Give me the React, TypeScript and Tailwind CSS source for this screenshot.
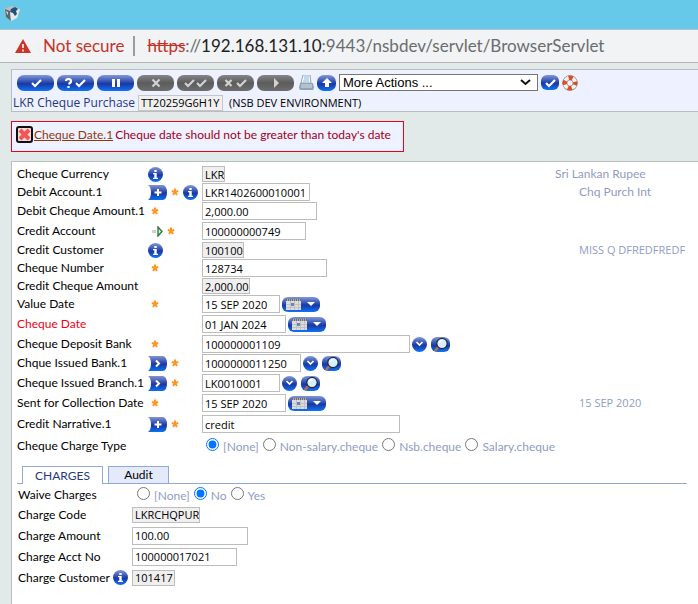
import type { ReactNode } from "react";

const blue = "bg-linear-to-b from-[#8496d6] via-[#1838a4] via-55% to-[#0b74f8]";
const grey = "bg-linear-to-b from-[#858585] via-[#5c5c5c] to-[#6e6e6e]";

function Tick() {
  return <path d="M1 5l3 3 6-6" />;
}

function ToolButton({ label, dark, children }: { label: string; dark?: boolean; children: ReactNode }) {
  return (
    <button
      type="button"
      aria-label={label}
      className={`flex h-4 w-[37px] shrink-0 items-center justify-center rounded-[7px] ${dark ? grey : blue}`}
    >
      <svg width="24" height="10" viewBox="0 0 24 10" fill="none" stroke={dark ? "#d2d2d2" : "#fff"} strokeWidth="2.2">
        {children}
      </svg>
    </button>
  );
}

function Info() {
  return (
    <button
      type="button"
      aria-label="Information"
      className={`flex size-[15px] shrink-0 items-center justify-center rounded-full ${blue}`}
    >
      <svg width="5" height="9" viewBox="0 0 5 9" fill="#fff">
        <path d="M1.300 0h2.400v2H1.300zM0 3h3.700v4.700H5V9H0V7.700h1.300V4.300H0z" />
      </svg>
    </button>
  );
}

function Expand({ plus }: { plus?: boolean }) {
  return (
    <button type="button" aria-label={plus ? "Add value" : "Expand"} className="shrink-0">
      <svg width="19" height="15" viewBox="0 0 19 15">
        <defs>
          <linearGradient id="flag" x1="0" y1="0" x2="0" y2="1">
            <stop offset="0" stopColor="#8494d2" />
            <stop offset=".55" stopColor="#1b37a3" />
            <stop offset="1" stopColor="#0a72f4" />
          </linearGradient>
        </defs>
        <path d="M0 0h15q4 1 4 7.500t-4 7.500H0q3-2 3-7.500T0 0z" fill="url(#flag)" />
        <path d={plus ? "M10 4v7M6.500 7.500h7" : "M8 4.500l3 3L8 10.500"} fill="none" stroke="#fff" strokeWidth="2" />
      </svg>
    </button>
  );
}

function Star() {
  return (
    <svg className="shrink-0" width="8" height="8" viewBox="0 0 8 8" stroke="#ff9420" strokeWidth="2">
      <path d="M4 0.500v3.500M0.800 3L4 4M7.200 3L4 4M2 7L4 4M6 7L4 4" />
    </svg>
  );
}

function Arrow() {
  return (
    <svg className="shrink-0" width="15" height="11" viewBox="0 0 15 11">
      <path d="M4 4h4v3H4z" fill="#cdd5c6" />
      <path d="M10 1v9l4-4.500z" fill="#e6efe6" stroke="#2f7a3c" strokeWidth="1.400" />
    </svg>
  );
}

function Calendar() {
  return (
    <button
      type="button"
      aria-label="Choose date"
      className={`flex h-[15px] w-[38px] shrink-0 items-center justify-between rounded-[6px] px-1 ${blue}`}
    >
      <svg width="15" height="11" viewBox="0 0 15 11">
        <path d="M0 0h15v11H0z" fill="#dcdcdc" />
        <path d="M0 0h15v2H0z" fill="#6d6d6d" />
        <path d="M1 1h14" stroke="#eee" strokeDasharray="1 1" />
        <path d="M0 5.500h15M0 8.500h15M4.500 2v9M8.500 2v9M12.500 2v9" stroke="#c2c2c2" />
        <path d="M5 4h3v3H5z" fill="#6c82c4" />
      </svg>
      <svg width="10" height="6" viewBox="0 0 10 6">
        <path d="M1 1h8L5 5z" fill="#fff" />
      </svg>
    </button>
  );
}

function Drop() {
  return (
    <button
      type="button"
      aria-label="Open list"
      className={`flex size-[15px] shrink-0 items-center justify-center rounded-full ${blue}`}
    >
      <svg width="9" height="6" viewBox="0 0 9 6" fill="none" stroke="#fff" strokeWidth="1.700">
        <path d="M1.500 1l3 3 3-3" />
      </svg>
    </button>
  );
}

function Search() {
  return (
    <button
      type="button"
      aria-label="Search"
      className={`flex h-[15px] w-[19px] shrink-0 items-center justify-center rounded-[6px] ${blue}`}
    >
      <svg width="17" height="15" viewBox="0 0 17 15">
        <path d="M7 9l-4 5" stroke="#c0713e" strokeWidth="2.500" />
        <circle cx="10" cy="6.500" r="5.200" fill="#d8efff" stroke="#1c2740" strokeWidth="1.200" />
        <path d="M7.500 6q0-2.500 3-2.500" fill="none" stroke="#fff" strokeWidth="1.400" />
      </svg>
    </button>
  );
}

function Pickers() {
  return (
    <div className="flex gap-1">
      <Drop />
      <Search />
    </div>
  );
}

function Value({ id, value, width, readOnly }: { id: string; value: string; width: string; readOnly?: boolean }) {
  return (
    <input
      id={id}
      defaultValue={value}
      readOnly={readOnly}
      className={`border border-[#bdbdbd] pl-[2px] font-['Open_Sans','Noto_Sans',sans-serif] text-[11px] leading-[14px] text-black outline-none ${width} ${
        readOnly ? "h-4 bg-[#efefef]" : "h-[18px] bg-white"
      }`}
    />
  );
}

function Choices({ name, options, picked }: { name: string; options: string[]; picked: string }) {
  return (
    <div role="radiogroup" aria-label={name} className="flex items-center gap-1 pl-1 text-[#8f9cc4]">
      {options.map((o) => (
        <label key={o} className="flex items-start gap-1">
          <input type="radio" name={name} defaultChecked={o === picked} className="size-[13px]" />
          <span className="pt-px">{o}</span>
        </label>
      ))}
    </div>
  );
}

type RowData = {
  label: string;
  height: string;
  icons?: ReactNode;
  value?: string;
  width?: string;
  readOnly?: boolean;
  after?: ReactNode;
  note?: string;
  noteClass?: string;
  error?: boolean;
};

const required = (
  <span className="pl-[3px]">
    <Star />
  </span>
);

const capsNote = "pl-6 font-['Open_Sans','Noto_Sans',sans-serif] text-[11px]";

const rows: RowData[] = [
  { label: "Cheque Currency", height: "h-[18px]", icons: <Info />, value: "LKR", width: "w-[23px]", readOnly: true, note: "Sri Lankan Rupee" },
  { label: "Debit Account.1", height: "h-[18px]", icons: <><Expand plus /><Star /><Info /></>, value: "LKR1402600010001", width: "w-[108px]", note: "Chq Purch Int", noteClass: "pl-6" },
  { label: "Debit Cheque Amount.1", height: "h-5", icons: required, value: "2,000.00", width: "w-[115px]" },
  { label: "Credit Account", height: "h-5", icons: <><Arrow /><Star /></>, value: "100000000749", width: "w-[104px]" },
  { label: "Credit Customer", height: "h-[18px]", icons: <Info />, value: "100100", width: "w-[42px]", readOnly: true, note: "MISS Q DFREDFREDF", noteClass: capsNote },
  { label: "Cheque Number", height: "h-[18px]", icons: required, value: "128734", width: "w-[125px]" },
  { label: "Credit Cheque Amount", height: "h-[18px]", value: "2,000.00", width: "w-[48px]", readOnly: true },
  { label: "Value Date", height: "h-[18px]", icons: required, value: "15 SEP 2020", width: "w-[78px]", after: <Calendar /> },
  { label: "Cheque Date", height: "h-[22px]", value: "01 JAN 2024", width: "w-[84px]", after: <Calendar />, error: true },
  { label: "Cheque Deposit Bank", height: "h-[18px]", icons: required, value: "100000001109", width: "w-[208px]", after: <Pickers /> },
  { label: "Chque Issued Bank.1", height: "h-5", icons: <><Expand /><Star /></>, value: "1000000011250", width: "w-[99px]", after: <Pickers /> },
  { label: "Cheque Issued Branch.1", height: "h-5", icons: <><Expand /><Star /></>, value: "LK0010001", width: "w-[78px]", after: <Pickers /> },
  { label: "Sent for Collection Date", height: "h-5", icons: required, value: "15 SEP 2020", width: "w-[84px]", after: <Calendar />, note: "15 SEP 2020", noteClass: capsNote },
  { label: "Credit Narrative.1", height: "h-[22px]", icons: <><Expand plus /><Star /></>, value: "credit", width: "w-[198px]" },
];

const charges = [
  { label: "Charge Code", value: "LKRCHQPUR", width: "w-[68px]", readOnly: true },
  { label: "Charge Amount", value: "100.00", width: "w-[116px]" },
  { label: "Charge Acct No", value: "100000017021", width: "w-[105px]" },
  { label: "Charge Customer", value: "101417", width: "w-[43px]", readOnly: true, info: true },
];

export default function App() {
  return (
    <div className="flex min-h-screen flex-col bg-[#e1eae8] font-[Lato,'Open_Sans',sans-serif] text-[12px] leading-4 text-black">
      <div className="h-[29px] bg-[#66c9ea] pt-[6px] pl-1">
        <svg width="17" height="16" viewBox="0 0 17 16">
          <path d="M0 3l7-3 9 3-3 9-6 3-5-4z" fill="#b9bec1" />
          <path d="M1 3l5 2 1 10-5-4z" fill="#5c6870" />
          <path d="M6 5l10-2-3 9-6 3z" fill="#e3e8ea" />
          <path d="M7 3l4-2 3 2-2 2 1 3-2 2-2-3-3-1z" fill="#25507c" />
          <path d="M2 5l2 1v3L3 8z" fill="#c9d4da" />
        </svg>
      </div>
      <header className="flex h-[34px] items-center border-t border-b border-t-[#b3c5cc] border-b-[#b3b5b6] bg-[#f1f3f4] pl-[15px] text-[17px] leading-6 whitespace-nowrap">
        <svg width="16" height="14" viewBox="0 0 16 14">
          <path d="M8 0l8 14H0z" fill="#cb3428" />
          <path d="M8 5v4M8 10.500v2" stroke="#fff" strokeWidth="1.600" />
        </svg>
        <span className="ml-3 text-[#c5322b]">Not secure</span>
        <span className="mx-[9px] h-5 w-[2px] bg-[#9a9c9e]" />
        <p className="ml-[3px] text-[#6a6d70]">
          <span className="text-[#c5322b] line-through">https</span>://<span className="text-[#202124]">192.168.131.10</span>
          :9443/nsbdev/servlet/BrowserServlet
        </p>
      </header>

      <main className="flex grow flex-col pt-[6px] pl-[11px]">
        <section className="h-[43px] border border-r-0 border-[#bbbdbd] bg-[#eef1ff]">
          <div className="flex h-[25px] items-center gap-[3px] pl-[5px]">
            <ToolButton label="Commit"><g transform="translate(7)"><Tick /></g></ToolButton>
            <ToolButton label="Validate">
              <path d="M2 3q0-2 2.500-2T7 3 4.500 6M4.500 8v2" />
              <g transform="translate(11)"><Tick /></g>
            </ToolButton>
            <ToolButton label="Hold"><path d="M9.500 1v8M14.500 1v8" strokeWidth="3" /></ToolButton>
            <ToolButton label="Delete" dark><path d="M8.500 1.500l7 7M15.500 1.500l-7 7" /></ToolButton>
            <ToolButton label="Authorise" dark><Tick /><g transform="translate(12)"><Tick /></g></ToolButton>
            <ToolButton label="Reverse" dark><path d="M1.500 2l6 6M7.500 2l-6 6" /><g transform="translate(12)"><Tick /></g></ToolButton>
            <ToolButton label="Next" dark><path d="M10 0v10l5-5z" fill="#d2d2d2" stroke="none" /></ToolButton>
            <button type="button" aria-label="Print" className="ml-[2px] shrink-0">
              <svg width="15" height="15" viewBox="0 0 15 15">
                <path d="M4 0h7l1 8H2z" fill="#f4f9fd" stroke="#8aa6bd" />
                <path d="M5 2h5M5 4h5M4 6h6" stroke="#93b6d2" />
                <path d="M1 8h13l1 5-1 2H1l-1-2z" fill="#8ea4b5" />
                <path d="M2 10h11M2 12h11" stroke="#d5e0e7" />
              </svg>
            </button>
            <button type="button" aria-label="Up" className={`flex h-4 w-[19px] shrink-0 items-center justify-center rounded-[7px] ${blue}`}>
              <svg width="10" height="10" viewBox="0 0 10 10" fill="#fff"><path d="M5 0l5 5H7v4H3V5H0z" /></svg>
            </button>
            <div className="relative flex shrink-0">
              <select
                aria-label="More actions"
                className="h-[17px] w-[199px] appearance-none border border-[#767676] bg-white pl-[3px] font-['Liberation_Sans',Arial,sans-serif] text-[13px] leading-[15px] text-black"
              >
                <option>More Actions ...</option>
              </select>
              <svg className="pointer-events-none absolute top-[5px] right-[7px]" width="11" height="7" viewBox="0 0 11 7" fill="none" stroke="#111" strokeWidth="2">
                <path d="M1 1l4.500 4L10 1" />
              </svg>
            </div>
            <button type="button" aria-label="Run action" className={`flex h-[15px] w-[18px] shrink-0 items-center justify-center rounded-[6px] ${blue}`}>
              <svg width="11" height="10" viewBox="0 0 11 10" fill="none" stroke="#fff" strokeWidth="2.200"><Tick /></svg>
            </button>
            <button type="button" aria-label="Help" className="shrink-0">
              <svg width="16" height="16" viewBox="0 0 16 16" fill="none">
                <circle cx="8" cy="8" r="5.200" stroke="#8b7b78" strokeWidth="5" />
                <circle cx="8" cy="8" r="5.200" stroke="#f6f1ee" strokeWidth="4" />
                <circle cx="8" cy="8" r="5.200" stroke="#dc4e20" strokeWidth="4.400" strokeDasharray="4.084" strokeDashoffset="2.042" />
              </svg>
            </button>
          </div>
          <div className="flex h-4 items-center font-['Open_Sans','Noto_Sans',sans-serif] whitespace-nowrap">
            <h1 className="w-[126px] pl-px text-[#26397c]">LKR Cheque Purchase</h1>
            <input aria-label="Transaction" readOnly defaultValue="TT20259G6H1Y" className="h-4 w-[85px] border border-[#c6c6c6] bg-[#f0f0f0] px-[2px] text-[11px] outline-none" />
            <span className="pl-[6px] text-[11px]">(NSB DEV ENVIRONMENT)</span>
          </div>
        </section>

        <section role="alert" className="mt-[9px] flex h-[31px] items-center self-start border border-[#f00018] bg-[#eef1ff] pr-3 pb-1 pl-[4px] whitespace-nowrap text-[#a00018]">
          <svg width="17" height="17" viewBox="0 0 17 17">
            <rect x="1" y="1" width="15" height="15" rx="2" fill="#f6dada" stroke="#101010" strokeWidth="2" />
            <path d="M4 4l9 9M13 4l-9 9" stroke="#f25555" strokeWidth="4" />
          </svg>
          <a href="#chequeDate" className="ml-px text-[#8f3a0c] underline">Cheque Date.1</a>
          <span className="pl-[2px]">Cheque date should not be greater than today's date</span>
        </section>

        <form className="mt-[9px] grow border-t border-l border-[#b9bfbd] bg-white pt-[3px] pl-[5px] whitespace-nowrap">
          {rows.map((r) => {
            const id = r.label === "Cheque Date" ? "chequeDate" : r.label;
            return (
              <div key={r.label} className={`grid grid-cols-[130px_55px_353px_1fr] items-center ${r.height}`}>
                <label htmlFor={id} className={r.error ? "text-[#f00018]" : ""}>{r.label}</label>
                <div className="flex items-center gap-1 pl-px">{r.icons}</div>
                <div className="flex items-center gap-[2px]">
                  <Value id={id} value={r.value ?? ""} width={r.width ?? ""} readOnly={r.readOnly} />
                  {r.after}
                </div>
                <output htmlFor={id} className={`text-[#8f9cc4] ${r.noteClass ?? ""}`}>{r.note}</output>
              </div>
            );
          })}
          <div className="grid h-[22px] grid-cols-[185px_1fr] items-center">
            <span>Cheque Charge Type</span>
            <Choices name="Cheque Charge Type" options={["[None]", "Non-salary.cheque", "Nsb.cheque", "Salary.cheque"]} picked="[None]" />
          </div>

          <div role="tablist" className="mt-[10px] mr-[11px] flex h-[17px] items-end border-b border-[#92a8d6] pl-[5px]">
            <button type="button" role="tab" aria-selected="true" className="-mb-px h-[18px] w-[81px] border border-b-0 border-[#92a8d6] bg-white text-[#26397c]">CHARGES</button>
            <button type="button" role="tab" aria-selected="false" className="-mb-px ml-[5px] h-[18px] w-[61px] border border-[#92a8d6] bg-[#e4eafa]">Audit</button>
          </div>

          <div className="grid h-5 grid-cols-[115px_1fr] items-center pt-[2px] pl-px">
            <span>Waive Charges</span>
            <Choices name="Waive Charges" options={["[None]", "No", "Yes"]} picked="No" />
          </div>
          {charges.map((c) => (
            <div key={c.label} className="grid h-[21px] grid-cols-[114px_1fr] items-center pl-px">
              <div className="flex items-center justify-between pr-1">
                <label htmlFor={c.label}>{c.label}</label>
                {c.info && <Info />}
              </div>
              <Value id={c.label} value={c.value} width={c.width} readOnly={c.readOnly} />
            </div>
          ))}
        </form>
      </main>
    </div>
  );
}
